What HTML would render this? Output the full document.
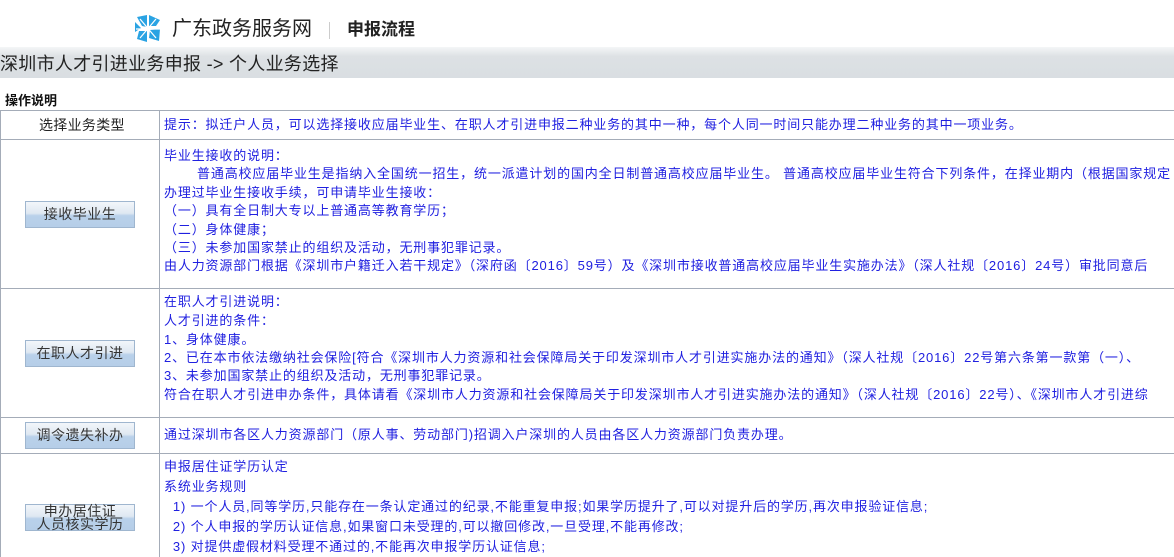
<!DOCTYPE html>
<html><head><meta charset="utf-8"><style>
*{margin:0;padding:0;box-sizing:border-box}
body{width:1174px;height:557px;overflow:hidden;background:#fff;position:relative;font-family:"Liberation Sans","Noto Sans CJK SC","WenQuanYi Zen Hei",sans-serif}
.a{position:absolute;white-space:nowrap}
.t{font-size:13px;color:#2020e0;line-height:18px;letter-spacing:0.85px}
.hl{position:absolute;left:0;width:1174px;height:1px;background:#a4acb8}
.vl{position:absolute;width:1px;background:#a4acb8}
.btn{position:absolute;left:25px;width:110px;height:27px;border:1px solid #9fb6cf;background:linear-gradient(#f2f6fa 0%,#dfe8f2 45%,#b9d1ea 55%,#b6cee8 100%);font-size:14px;color:#333;text-align:center;line-height:25px;letter-spacing:0.5px}
</style></head><body>
<svg class="a" style="left:134px;top:13px" width="28" height="32" viewBox="0 0 28 32">
<g fill="#2aa3e3">
<polygon points="3,4 13,2 13,14 8,13"/>
<polygon points="15,2 26,7 22,13 15,13"/>
<polygon points="26,16 25,28 15,25 16,17"/>
<polygon points="13,29 3,26 5,18 13,18"/>
<polygon points="1,9 7,15 1,19"/>
</g>
<g stroke="#fff" stroke-width="1.2"><line x1="6" y1="6" x2="22" y2="25"/><line x1="22" y1="6" x2="6" y2="25"/><line x1="14" y1="3" x2="14" y2="28"/><line x1="2" y1="16" x2="27" y2="16"/></g>
</svg>
<div class="a" style="left:172px;top:15px;font-size:20px;color:#222;line-height:28px">广东政务服务网</div>
<div class="a" style="left:329px;top:22px;width:1px;height:17px;background:#ccc"></div>
<div class="a" style="left:347px;top:17px;font-size:17px;font-weight:bold;color:#222;line-height:26px">申报流程</div>
<div class="a" style="left:0;top:47px;width:1174px;height:31px;background:linear-gradient(#f4f6f7,#dde1e4 30%,#d9dee2)"></div>
<div class="a" style="left:0;top:52px;font-size:18px;color:#222;line-height:24px;letter-spacing:0.3px">深圳市人才引进业务申报 -&gt; 个人业务选择</div>
<div class="a" style="left:5px;top:92px;font-size:13px;font-weight:bold;color:#111;line-height:18px">操作说明</div>
<div class="hl" style="top:110px"></div>
<div class="hl" style="top:139px"></div>
<div class="hl" style="top:288px"></div>
<div class="hl" style="top:417px"></div>
<div class="hl" style="top:453px"></div>
<div class="vl" style="left:0;top:110px;height:447px"></div>
<div class="vl" style="left:159px;top:110px;height:447px"></div>
<div class="a" style="left:39px;top:116px;font-size:14px;color:#222;line-height:18px;letter-spacing:0.3px">选择业务类型</div>
<div class="a t" style="left:164px;top:116px">提示：拟迁户人员，可以选择接收应届毕业生、在职人才引进申报二种业务的其中一种，每个人同一时间只能办理二种业务的其中一项业务。</div>
<div class="btn" style="top:201px">接收毕业生</div>
<div class="a t" style="left:164px;top:147px">毕业生接收的说明：</div>
<div class="a t" style="left:197px;top:165px">普通高校应届毕业生是指纳入全国统一招生，统一派遣计划的国内全日制普通高校应届毕业生。 普通高校应届毕业生符合下列条件，在择业期内（根据国家规定</div>
<div class="a t" style="left:164px;top:184px">办理过毕业生接收手续，可申请毕业生接收：</div>
<div class="a t" style="left:164px;top:202px">（一）具有全日制大专以上普通高等教育学历；</div>
<div class="a t" style="left:164px;top:221px">（二）身体健康；</div>
<div class="a t" style="left:164px;top:239px">（三）未参加国家禁止的组织及活动，无刑事犯罪记录。</div>
<div class="a t" style="left:164px;top:257px">由人力资源部门根据《深圳市户籍迁入若干规定》（深府函〔2016〕59号）及《深圳市接收普通高校应届毕业生实施办法》（深人社规〔2016〕24号）审批同意后</div>
<div class="btn" style="top:340px">在职人才引进</div>
<div class="a t" style="left:164px;top:293px">在职人才引进说明：</div>
<div class="a t" style="left:164px;top:312px">人才引进的条件：</div>
<div class="a t" style="left:164px;top:331px">1、身体健康。</div>
<div class="a t" style="left:164px;top:349px">2、已在本市依法缴纳社会保险[符合《深圳市人力资源和社会保障局关于印发深圳市人才引进实施办法的通知》（深人社规〔2016〕22号第六条第一款第（一）、</div>
<div class="a t" style="left:164px;top:367px">3、未参加国家禁止的组织及活动，无刑事犯罪记录。</div>
<div class="a t" style="left:164px;top:386px">符合在职人才引进申办条件，具体请看《深圳市人力资源和社会保障局关于印发深圳市人才引进实施办法的通知》（深人社规〔2016〕22号）、《深圳市人才引进综</div>
<div class="btn" style="top:422px">调令遗失补办</div>
<div class="a t" style="left:164px;top:426px">通过深圳市各区人力资源部门（原人事、劳动部门)招调入户深圳的人员由各区人力资源部门负责办理。</div>
<div class="btn" style="top:504px;line-height:13px">申办居住证<br>人员核实学历</div>
<div class="a t" style="left:164px;top:458px">申报居住证学历认定</div>
<div class="a t" style="left:164px;top:478px">系统业务规则</div>
<div class="a t" style="left:164px;top:498px">&nbsp;&nbsp;1) 一个人员,同等学历,只能存在一条认定通过的纪录,不能重复申报;如果学历提升了,可以对提升后的学历,再次申报验证信息;</div>
<div class="a t" style="left:164px;top:518px">&nbsp;&nbsp;2) 个人申报的学历认证信息,如果窗口未受理的,可以撤回修改,一旦受理,不能再修改;</div>
<div class="a t" style="left:164px;top:538px">&nbsp;&nbsp;3) 对提供虚假材料受理不通过的,不能再次申报学历认证信息;</div>
</body></html>
